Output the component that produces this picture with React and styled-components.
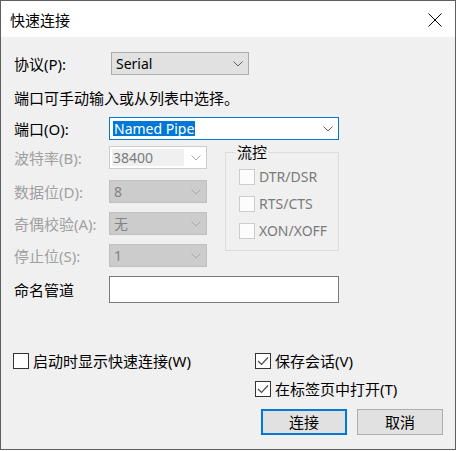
import React from 'react';
import styled, { createGlobalStyle } from 'styled-components';

const Global = createGlobalStyle`
  html, body { margin: 0; padding: 0; background: #ffffff; }
  body {
    font-family: "Noto Sans", "Noto Sans CJK SC", sans-serif;
    font-size: 15px;
    color: #000;
  }
  * { box-sizing: border-box; }
`;

const Window = styled.div`
  width: 456px;
  height: 450px;
  border: 1px solid #5f5f5f;
  background: #f0f0f0;
  display: flex;
  flex-direction: column;
`;

const TitleBar = styled.div`
  height: 36px;
  background: #ffffff;
  display: flex;
  align-items: center;
  justify-content: space-between;
  padding: 0 13px 0 9px;
  flex-shrink: 0;
`;

const Title = styled.span`
  font-size: 15px;
  line-height: 20px;
  margin-top: 1px;
`;

const CloseBtn = styled.div`
  width: 14px;
  height: 14px;
  display: flex;
  margin-top: 1px;
`;

const Body = styled.div`
  flex: 1;
  display: flex;
  flex-direction: column;
  padding: 15px 12px 0 13px;
`;

const Row = styled.div`
  display: flex;
  align-items: center;
  height: ${p => p.$h || 23}px;
  margin-top: ${p => p.$mt || 0}px;
  margin-bottom: ${p => p.$mb || 0}px;
`;

const Label = styled.span`
  width: 95px;
  flex-shrink: 0;
  line-height: 20px;
  color: ${p => (p.$disabled ? '#a0a0a0' : '#000')};
  white-space: nowrap;
`;

const Hint = styled.div`
  margin-top: ${p => p.$mt || 0}px;
  line-height: 20px;
  white-space: nowrap;
`;

const comboStyles = {
  button: { bg: '#e1e1e1', border: '#adadad', color: '#000' },
  focus: { bg: '#ffffff', border: '#0078d7', color: '#000' },
  edit: { bg: '#ffffff', border: '#cccccc', color: '#7a7a7a' },
  disabled: { bg: '#cccccc', border: '#bfbfbf', color: '#838383' },
};

const Combo = styled.div`
  width: ${p => p.$w}px;
  height: 23px;
  margin-left: ${p => p.$ml || 0}px;
  display: flex;
  align-items: center;
  justify-content: space-between;
  padding: 0 5px 0 ${p => p.$pl ?? 4}px;
  border: 1px solid ${p => comboStyles[p.$kind].border};
  background: ${p => comboStyles[p.$kind].bg};
  color: ${p => comboStyles[p.$kind].color};
  font-size: 14px;
  line-height: 18px;
  white-space: nowrap;
`;

const Selected = styled.span`
  background: #0078d7;
  color: #ffffff;
  padding: 0 1px;
  line-height: 15px;
`;

const EditArea = styled.span`
  width: 72px;
  height: 17px;
  background: #f0f0f0;
  display: flex;
  align-items: center;
  padding-left: 1px;
`;

const Middle = styled.div`
  display: flex;
  gap: 18px;
  margin-top: 4px;
`;

const LeftCol = styled.div`
  display: flex;
  flex-direction: column;
  gap: 9px;
  padding-top: 2px;
`;

const Group = styled.fieldset`
  margin: 0;
  width: 114px;
  height: 107px;
  border: 1px solid #dcdcdc;
  padding: 3px 0 0 13px;
  display: flex;
  flex-direction: column;
`;

const Legend = styled.legend`
  padding: 0 2px;
  margin-left: -4px;
  line-height: 16px;
  font-size: 15px;
`;

const CheckRow = styled.label`
  display: flex;
  align-items: center;
  height: ${p => p.$h || 27}px;
  gap: ${p => p.$gap || 4}px;
  color: ${p => (p.$disabled ? '#7a7a7a' : '#000')};
  font-size: ${p => (p.$small ? 14 : 15)}px;
  line-height: 18px;
  white-space: nowrap;
`;

const Box = styled.span`
  width: 16px;
  height: 16px;
  flex-shrink: 0;
  border: 1px solid ${p => (p.$disabled ? '#cccccc' : '#333333')};
  background: ${p => (p.$disabled ? '#fcfcfc' : '#ffffff')};
  display: flex;
  align-items: center;
  justify-content: center;
`;

const TextBox = styled.div`
  width: 230px;
  height: 27px;
  border: 1px solid #7a7a7a;
  background: #ffffff;
`;

const Bottom = styled.div`
  display: grid;
  grid-template-columns: 242px 1fr;
  grid-auto-rows: 28px;
  margin-top: 44px;
  margin-left: -1px;
`;

const Buttons = styled.div`
  display: flex;
  justify-content: flex-end;
  gap: 10px;
  margin-top: 6px;
`;

const Button = styled.div`
  width: 86px;
  height: 26px;
  display: flex;
  align-items: center;
  justify-content: center;
  background: #e1e1e1;
  border: ${p => (p.$default ? '2px solid #0078d7' : '1px solid #adadad')};
  line-height: 20px;
`;

const Chevron = ({ color = '#606060' }) => (
  <svg width="10" height="6" viewBox="0 0 10 6">
    <path d="M0.5 0.5 L5 5 L9.5 0.5" fill="none" stroke={color} strokeWidth="1" />
  </svg>
);

const Check = () => (
  <svg width="12" height="10" viewBox="0 0 12 10">
    <path d="M1 5 L4.5 8.5 L11 1.5" fill="none" stroke="#4a4a4a" strokeWidth="1.2" />
  </svg>
);

const CheckItem = ({ checked, disabled, children, small }) => (
  <CheckRow $disabled={disabled} $small={small}>
    <Box $disabled={disabled}>{checked && <Check />}</Box>
    <span>{children}</span>
  </CheckRow>
);

export default function App() {
  return (
    <>
      <Global />
      <Window>
        <TitleBar>
          <Title>快速连接</Title>
          <CloseBtn>
            <svg width="14" height="14" viewBox="0 0 14 14">
              <path d="M0.5 0.5 L13.5 13.5 M13.5 0.5 L0.5 13.5" stroke="#000" strokeWidth="1" />
            </svg>
          </CloseBtn>
        </TitleBar>
        <Body>
          <Row>
            <Label>协议(P):</Label>
            <Combo $kind="button" $w={138} $ml={2}>
              <span>Serial</span>
              <Chevron />
            </Combo>
          </Row>
          <Hint $mt={13}>端口可手动输入或从列表中选择。</Hint>
          <Row $mt={9}>
            <Label>端口(O):</Label>
            <Combo $kind="focus" $w={230} $pl={3}>
              <Selected>Named Pipe</Selected>
              <Chevron />
            </Combo>
          </Row>
          <Middle>
            <LeftCol>
              <Row $mb={2}>
                <Label $disabled>波特率(B):</Label>
                <Combo $kind="edit" $w={98} $pl={2}>
                  <EditArea>38400</EditArea>
                  <Chevron color="#a8a8a8" />
                </Combo>
              </Row>
              <Row>
                <Label $disabled>数据位(D):</Label>
                <Combo $kind="disabled" $w={98}>
                  <span>8</span>
                  <Chevron color="#a8a8a8" />
                </Combo>
              </Row>
              <Row>
                <Label $disabled>奇偶校验(A):</Label>
                <Combo $kind="disabled" $w={98}>
                  <span>无</span>
                  <Chevron color="#a8a8a8" />
                </Combo>
              </Row>
              <Row>
                <Label $disabled>停止位(S):</Label>
                <Combo $kind="disabled" $w={98}>
                  <span>1</span>
                  <Chevron color="#a8a8a8" />
                </Combo>
              </Row>
            </LeftCol>
            <Group>
              <Legend>流控</Legend>
              <CheckItem disabled small>DTR/DSR</CheckItem>
              <CheckItem disabled small>RTS/CTS</CheckItem>
              <CheckItem disabled small>XON/XOFF</CheckItem>
            </Group>
          </Middle>
          <Row $h={27} $mt={9}>
            <Label>命名管道</Label>
            <TextBox />
          </Row>
          <Bottom>
            <CheckItem>启动时显示快速连接(W)</CheckItem>
            <CheckItem checked>保存会话(V)</CheckItem>
            <span />
            <CheckItem checked>在标签页中打开(T)</CheckItem>
          </Bottom>
          <Buttons>
            <Button $default>连接</Button>
            <Button>取消</Button>
          </Buttons>
        </Body>
      </Window>
    </>
  );
}
